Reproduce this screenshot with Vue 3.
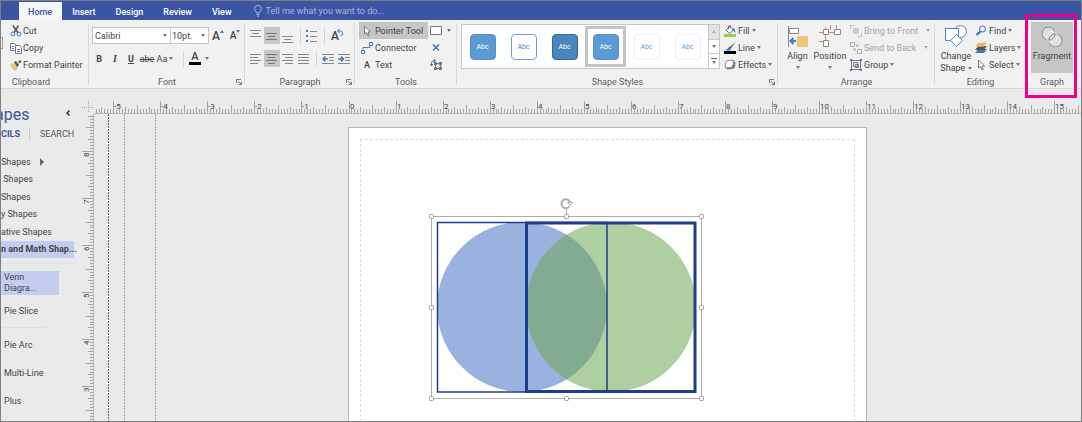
<script setup>
import { ref } from 'vue'

const tabs = ['Home', 'Insert', 'Design', 'Review', 'View']
const font = ref('Calibri')
const size = ref('10pt.')
const styles = ['solid', 'outline', 'deep', 'solid picked', 'faint', 'faint']
const stencils = ['Shapes', '\u00a0Shapes', 'Shapes', 'y Shapes', 'ative Shapes', 'n and Math Shap...']

const INCH = 47.05
const tickLength = (k) => (k % 16 === 0 ? 12 : k % 8 === 0 ? 8 : k % 4 === 0 ? 6 : 4)

const hTicks = []
for (let k = -86; k < 250; k++) {
  const x = Math.round(254.5 + (k * INCH) / 16)
  if (x >= 0) hTicks.push({ x, len: tickLength(k + 160), label: k % 16 === 0 ? String(k / 16) : '' })
}
const vTicks = []
for (let k = 0; k < 110; k++) {
  const y = Math.round(38 + ((k - 12) * INCH) / 16) - 1
  if (y >= 1) vTicks.push({ y, len: tickLength(k + 4), label: (k + 4) % 16 === 0 && k < 100 ? String(9 - (k + 4) / 16) : '' })
}
const handles = [[4, 18], [139, 18], [274, 18], [4, 109], [274, 109], [4, 200], [139, 200], [274, 200]]
</script>

<template>
  <div class="window">
    <header class="tabs">
      <button v-for="(t, i) in tabs" :key="t" class="tab" :class="{ active: i === 0 }">{{ t }}</button>
      <label class="tell">
        <svg width="8" height="12" viewBox="0 0 8 12" fill="none" stroke="#a9b8de"><path d="M2.5 8C2.5 6.5 .6 5.8.6 3.8a3.4 3.4 0 0 1 6.8 0C7.400 5.800 5.500 6.500 5.500 8zM2.500 9.500h3M3 11.200h2" /></svg>
        <input type="text" placeholder="Tell me what you want to do..." />
      </label>
    </header>

    <div class="ribbon">
      <section class="group clipboard">
        <div class="body">
          <span class="paste-edge"></span>
          <div class="rows">
            <button class="cmd"><svg width="12" height="12" viewBox="0 0 12 12" fill="none"><path d="M3 .5 8 8M8.500.5 3.800 8" stroke="#555" stroke-width="1.500" /><circle cx="2.800" cy="9" r="2" stroke="#3a78c0" /><circle cx="9" cy="9" r="2" stroke="#3a78c0" /></svg>Cut</button>
            <button class="cmd"><svg width="12" height="12" viewBox="0 0 12 12" fill="#fff" stroke="#778"><path d="M.5 1.500h4l2 2v5h-6z" /><path d="M5.500 3.500h4l2 2v6h-6z" /><path d="M7 7.500h3M7 9.500h3M2 4.500h2M2 6.500h2" stroke="#3a78c0" /></svg>Copy</button>
            <button class="cmd"><svg width="12" height="12" viewBox="0 0 12 12"><path d="M0 5 4 4l4 4-2 4-3-1z" fill="#efc37a" /><path d="m4 3 2-1 3 4-2 2zM8 3l2-2 1.500 1.500-2 2z" fill="#555" /></svg>Format Painter</button>
          </div>
        </div>
        <footer>Clipboard</footer>
      </section>

      <section class="group font">
        <div class="body two">
          <div class="line">
            <span class="combo face"><select v-model="font" aria-label="Font"><option>Calibri</option></select><i class="caret"></i></span>
            <span class="combo pt"><select v-model="size" aria-label="Font size"><option>10pt.</option></select><i class="caret"></i></span>
            <button class="icon grow" aria-label="Grow font"><b class="big">A</b><svg width="4" height="3" viewBox="0 0 4 3"><path d="M0 3 2 0l2 3z" fill="#3a78c0" /></svg></button>
            <button class="icon grow" aria-label="Shrink font"><b>A</b><svg width="4" height="3" viewBox="0 0 4 3"><path d="M0 0h4L2 3z" fill="#3a78c0" /></svg></button>
          </div>
          <div class="line letters">
            <button class="icon"><b>B</b></button>
            <button class="icon"><em>I</em></button>
            <button class="icon"><u>U</u></button>
            <button class="icon"><s>abc</s></button>
            <button class="icon case">Aa<i class="caret"></i></button>
            <span class="rule"></span>
            <button class="icon color"><b>A</b><i class="caret"></i></button>
          </div>
        </div>
        <footer>Font<svg class="launch" width="6" height="6" viewBox="0 0 6 6" fill="none" stroke="#777"><path d="M.5 4V.5H5M2 2l3 3M5.500 2.500v3h-3" /></svg></footer>
      </section>

      <section class="group para">
        <div class="body two">
          <div class="line">
            <button class="icon" aria-label="Align top"><svg width="12" height="16" viewBox="0 0 12 16" stroke="#888"><path d="M0 2.500h11M2 5.500h7M0 8.500h11" /></svg></button>
            <button class="icon on" aria-label="Align middle"><svg width="12" height="16" viewBox="0 0 12 16" stroke="#777"><path d="M0 5.500h11M2 8.500h7M0 11.500h11" /></svg></button>
            <button class="icon" aria-label="Align bottom"><svg width="12" height="16" viewBox="0 0 12 16" stroke="#888"><path d="M0 8.500h11M2 11.500h7M0 14.500h11" /></svg></button>
            <span class="rule"></span>
            <button class="icon" aria-label="Bullets"><svg width="12" height="14" viewBox="0 0 12 14"><path d="M4 2.500h7M4 7.500h7M4 12.500h7" stroke="#888" /><path d="M0 1h2v2H0zM0 6h2v2H0zM0 11h2v2H0z" fill="#3a78c0" /></svg></button>
            <span class="rule"></span>
            <button class="icon rotate" aria-label="Rotate text"><b>A</b><svg width="6" height="8" viewBox="0 0 6 8" fill="none" stroke="#3a78c0"><path d="M.5 2h2a2.500 2.500 0 0 1 1 5M2.500 0l-2 2 2 2" /></svg></button>
          </div>
          <div class="line">
            <button class="icon" aria-label="Align left"><svg width="12" height="12" viewBox="0 0 12 12" stroke="#888"><path d="M0 1.500h11M0 4.500h8M0 7.500h11M0 10.500h8" /></svg></button>
            <button class="icon on" aria-label="Center"><svg width="12" height="12" viewBox="0 0 12 12" stroke="#777"><path d="M0 1.500h11M2 4.500h7M0 7.500h11M2 10.500h7" /></svg></button>
            <button class="icon" aria-label="Align right"><svg width="12" height="12" viewBox="0 0 12 12" stroke="#888"><path d="M0 1.500h11M3 4.500h8M0 7.500h11M3 10.500h8" /></svg></button>
            <button class="icon" aria-label="Justify"><svg width="12" height="12" viewBox="0 0 12 12" stroke="#888"><path d="M0 1.500h11M0 4.500h11M0 7.500h11M0 10.500h11" /></svg></button>
            <span class="rule"></span>
            <button class="icon" aria-label="Decrease indent"><svg width="13" height="12" viewBox="0 0 13 12" stroke="#888" fill="none"><path d="M0 1.500h12M7 4.500h5M7 7.500h5M0 10.500h12" /><path d="M6 6H1.500M3.500 3.500 1 6l2.500 2.500" stroke="#3a78c0" stroke-width="1.500" /></svg></button>
            <button class="icon" aria-label="Increase indent"><svg width="13" height="12" viewBox="0 0 13 12" stroke="#888" fill="none"><path d="M0 1.500h12M7 4.500h5M7 7.500h5M0 10.500h12" /><path d="M0 6h5M3 3.500 5.500 6 3 8.500" stroke="#3a78c0" stroke-width="1.500" /></svg></button>
          </div>
        </div>
        <footer>Paragraph<svg class="launch" width="6" height="6" viewBox="0 0 6 6" fill="none" stroke="#777"><path d="M.5 4V.5H5M2 2l3 3M5.500 2.500v3h-3" /></svg></footer>
      </section>

      <section class="group tools">
        <div class="body">
          <div class="rows">
            <button class="cmd on"><svg width="12" height="12" viewBox="0 0 12 12"><path d="M3.500 1v8l2-1.500L7 11l1.200-.6L7 7h2.500z" fill="#fff" stroke="#777" /></svg>Pointer Tool</button>
            <button class="cmd"><svg width="12" height="12" viewBox="0 0 12 12" fill="none"><path d="M2 8V5.500h7V4" stroke="#777" /><path d="M.5 8.500h3v3h-3zM8.500.5h3v3h-3z" stroke="#3a78c0" /></svg>Connector</button>
            <button class="cmd"><b class="glyph">A</b>Text</button>
          </div>
          <div class="rows side">
            <button class="cmd" aria-label="Rectangle"><svg width="13" height="10" viewBox="0 0 13 10"><path d="M.5.5h11v8H.5z" fill="#fff" stroke="#777" /></svg><i class="caret"></i></button>
            <button class="cmd" aria-label="Connection point"><svg width="13" height="10" viewBox="0 0 13 10"><path d="m3 1.500 6 6m0-6-6 6" stroke="#3a78c0" stroke-width="1.500" /></svg></button>
            <button class="cmd" aria-label="Text block"><svg width="13" height="12" viewBox="0 0 13 12" fill="none"><path d="M5.500 4.500h5v5h-5z" stroke="#777" /><path d="M4 3h3v3H4zM9 3h3v3H9zM4 8h3v3H4zM9 8h3v3H9z" fill="#777" /><path d="M1.500 7V3.500Q1.500 1.500 5 1.500M0 5l1.500 2L3 5M3.500 0 5.500 1.500l-2 2" stroke="#3a78c0" /></svg></button>
          </div>
        </div>
        <footer>Tools</footer>
      </section>

      <section class="group styles">
        <div class="body">
          <div class="gallery">
            <div class="cells">
              <button v-for="(s, i) in styles" :key="i" class="cell" :class="s"><span>Abc</span></button>
            </div>
            <div class="scroller">
              <button aria-label="Previous styles"><i class="caret up"></i></button>
              <button aria-label="Next styles"><i class="caret"></i></button>
              <button aria-label="More styles"><i class="bar"></i><i class="caret"></i></button>
            </div>
          </div>
          <div class="rows">
            <button class="cmd"><svg width="12" height="12" viewBox="0 0 12 12"><path d="m2 5 4-3.500L9.500 5 5.500 8.500z" fill="#fff" stroke="#666" /><path d="M4.500 4V1q1-1 2 0v2" fill="none" stroke="#666" /><path d="M9 3q3 1 2 5-1-3-3-3z" fill="#3a78c0" /><path d="M0 9h12v3H0z" fill="#8fd14f" /></svg>Fill<i class="caret"></i></button>
            <button class="cmd"><svg width="12" height="12" viewBox="0 0 12 12"><path d="m11.500 0-5 7-2-1z" fill="#555" /><path d="M5 5 7 7 5.500 8.500H1Q3.500 7.500 5 5z" fill="#3a78c0" /><path d="M0 9h12v3H0z" fill="#000" /></svg>Line<i class="caret"></i></button>
            <button class="cmd"><svg width="12" height="12" viewBox="0 0 12 12"><path d="m3 2 7-.5 1.500 3-1 5-7 1L1 8z" fill="#777" /><path d="m3 1.500 6-.5.5 4-2 3.500-6 .5-.500-4z" fill="#fff" stroke="#888" /></svg>Effects<i class="caret"></i></button>
          </div>
        </div>
        <footer>Shape Styles<svg class="launch" width="6" height="6" viewBox="0 0 6 6" fill="none" stroke="#777"><path d="M.5 4V.5H5M2 2l3 3M5.500 2.500v3h-3" /></svg></footer>
      </section>

      <section class="group arrange">
        <div class="body">
          <button class="tall"><svg width="22" height="22" viewBox="0 0 22 22"><path d="M1.500 1v21" stroke="#888" /><path d="M2.500 3.500h9v5h-9z" fill="#fff" stroke="#888" /><path d="M10 11h11v11H10z" fill="#efc37a" /><path d="M9 16H4.500M6.500 13 3.500 16l3 3" fill="none" stroke="#3a78c0" stroke-width="2" /></svg><span>Align</span><i class="caret"></i></button>
          <button class="tall"><svg width="22" height="22" viewBox="0 0 22 22"><path d="M0 7.500h22M6.500 2v19M11.500 0v5M17.500 0v5M0 16.500h4" stroke="#e8806c" /><path d="M4.500 4.500h5v5h-5zM15.500 4.500h6v5h-6zM4.500 15.500h5v6h-5z" fill="#fff" stroke="#888" /></svg><span>Position</span><i class="caret"></i></button>
          <div class="rows">
            <button class="cmd dim"><svg width="12" height="12" viewBox="0 0 12 12" fill="none" stroke="#bbb"><path d="M.5 4V.500H4M8 11.500h3.500V8" /><path d="M3 3h6v6H3z" fill="#ccc" stroke="none" /></svg>Bring to Front<i class="caret far"></i></button>
            <button class="cmd dim"><svg width="12" height="12" viewBox="0 0 12 12" fill="none" stroke="#aaa"><path d="M.5.5h4v4h-4zM7.500 7.500h4v4h-4z" /><path d="M6 2h3v3H6zM3 6h3v3H3z" fill="#ccc" stroke="none" /></svg>Send to Back<i class="caret far"></i></button>
            <button class="cmd"><svg width="12" height="12" viewBox="0 0 12 12" fill="none" stroke="#777"><path d="M1.500 1.500h9v9h-9zM3.500 3.500h4v4h-4zM5.500 5.500h3v3h-3z" /><path d="M0 0h2v2H0zM10 0h2v2h-2zM0 10h2v2H0zM10 10h2v2h-2z" fill="#3a78c0" stroke="none" /></svg>Group<i class="caret"></i></button>
          </div>
        </div>
        <footer>Arrange</footer>
      </section>

      <section class="group editing">
        <div class="body">
          <button class="tall"><svg width="22" height="22" viewBox="0 0 22 22" fill="#fff" stroke="#4a84c4"><circle cx="15.500" cy="6.500" r="6" /><path d="M.5 3.500h13v12H.5z" /><path d="m11.500 9.500 6 6-6 6-6-6z" /></svg><span>Change</span><span>Shape <i class="caret"></i></span></button>
          <div class="rows">
            <button class="cmd"><svg width="12" height="12" viewBox="0 0 12 12" fill="none" stroke="#2f6fb5"><circle cx="7.500" cy="4" r="3" /><path d="M5.500 6.500 1.500 10" stroke-width="2" /></svg>Find<i class="caret"></i></button>
            <button class="cmd"><svg width="12" height="12" viewBox="0 0 12 12"><path d="m3 7.500 9-.5-3 4H0z" fill="#3a78c0" /><path d="m3 4.500 9-.5-3 4H0z" fill="#555" /><path d="m3 1 9-.5-3 4H0z" fill="#efb763" /></svg>Layers<i class="caret"></i></button>
            <button class="cmd"><svg width="12" height="12" viewBox="0 0 12 12"><path d="M3.500 1v8l2-1.500L7 11l1.200-.6L7 7h2.500z" fill="#fff" stroke="#777" /></svg>Select<i class="caret"></i></button>
          </div>
        </div>
        <footer>Editing</footer>
      </section>

      <section class="group graph">
        <div class="body">
          <button class="tall on"><svg width="22" height="22" viewBox="0 0 22 22" fill="#dedede" stroke="#8c8c8c"><circle cx="7.500" cy="8.500" r="6.500" /><circle cx="14.500" cy="15.500" r="6.500" /><circle cx="11" cy="12" r="5.500" fill="none" stroke="#f4f4f4" /><path d="M14 9a6.500 6.500 0 0 1-6 6 6.500 6.500 0 0 1 6-6z" fill="#f0f0f0" /></svg><span>Fragment</span></button>
        </div>
        <footer>Graph</footer>
        <div class="callout"></div>
      </section>
    </div>

    <main>
      <aside>
        <h1>apes<button aria-label="Collapse"><svg width="4" height="6" viewBox="0 0 4 6" fill="none" stroke="#333" stroke-width="1.500"><path d="M3.500.5 1 3l2.500 2.500" /></svg></button></h1>
        <nav><a href="#" class="current">CILS</a><a href="#">SEARCH</a></nav>
        <ul>
          <li v-for="(s, i) in stencils" :key="i" :class="{ sel: i === 5 }">{{ s }}<i v-if="i === 0" class="more"></i></li>
        </ul>
        <div class="masters">
          <div class="venn">Venn<br />Diagra...</div>
          <div class="slice">Pie Slice</div>
          <div class="master">Pie Arc</div>
          <div class="master">Multi-Line</div>
          <div class="master">Plus</div>
        </div>
      </aside>

      <div class="drawing">
        <svg class="corner" width="12" height="13" viewBox="0 0 12 13" stroke="#aaa" stroke-dasharray="1 1"><path d="M6.500 0v12M0 6.500h12" /></svg>
        <svg class="hruler" height="13">
          <g v-for="t in hTicks" :key="t.x">
            <rect :x="t.x" :y="12 - t.len" width="1" :height="t.len" fill="#a4a4a4" />
            <text v-if="t.label" :x="t.x + 1" y="8">{{ t.label }}</text>
          </g>
          <rect y="12" width="100%" height="1" fill="#b4b8ba" />
        </svg>
        <svg class="vruler" width="12">
          <g v-for="t in vTicks" :key="t.y">
            <rect :x="12 - t.len" :y="t.y" :width="t.len" height="1" fill="#a4a4a4" />
            <text v-if="t.label" :transform="`translate(7 ${t.y + 6}) rotate(-90)`">{{ t.label }}</text>
          </g>
          <rect x="11" width="1" height="100%" fill="#b4b8ba" />
        </svg>
        <div class="canvas">
          <svg class="guides" width="70" height="100%"><g stroke="#9aa4a9" stroke-dasharray="2 1"><line x1="14.500" x2="14.500" y1="0" y2="100%" stroke="#5a6872" /><line x1="30.500" x2="30.500" y1="0" y2="100%" /><line x1="61.500" x2="61.500" y1="0" y2="100%" /></g></svg>
          <div class="page">
            <div class="margins"></div>
            <svg class="shapes" width="280" height="206" viewBox="0 0 280 206">
              <defs><clipPath id="left"><circle cx="95" cy="109" r="85" /></clipPath></defs>
              <circle cx="95" cy="109" r="85" fill="#9ab2df" />
              <circle cx="184" cy="109" r="85" fill="#aed0a0" />
              <circle cx="184" cy="109" r="85" fill="#81ac92" clip-path="url(#left)" />
              <g fill="none" stroke="#1f3d8a">
                <path d="M10.500 24.500h169.500v169.500H10.500z" stroke-width="1.500" />
                <path d="M99.500 25h168.500v168.500H99.500z" stroke-width="3" />
              </g>
              <g fill="none" stroke="#adadad">
                <path d="M4.500 18.500h270v182h-270zM139.500 10v8" />
                <path d="M142.500 8.500a4.500 4.500 0 1 1 .8-4" stroke-width="2" />
                <path d="M140.500 4.500h5l-2.500 3z" fill="#fff" />
                <rect v-for="h in handles" :key="h.join()" :x="h[0] - 2 + 0.5" :y="h[1] - 2 + 0.5" width="4" height="4" rx="1" fill="#fff" stroke="#999" />
              </g>
            </svg>
          </div>
        </div>
      </div>
    </main>
  </div>
</template>

<style>
body { margin: 0; }
</style>

<style scoped>
.window { box-sizing: border-box; height: 100vh; display: flex; flex-direction: column; overflow: hidden; border: 1px solid #7f7f7f; background: #eaeaea; color: #444; font: 9px/12px Roboto, "Open Sans", sans-serif; }
button, input, select { font: inherit; color: inherit; background: none; border: 0; padding: 0; margin: 0; }
button { display: flex; align-items: center; white-space: nowrap; }
svg { display: block; flex: none; }
.tabs { flex: none; height: 19px; display: flex; padding-left: 18px; background: #3955a3; }
.tab { padding: 2px 10px 0; color: #fff; font-weight: 500; }
.tab.active { background: #f6f6f6; color: #3955a3; margin-top: 1px; padding: 1px 10px 0 9px; }
.tell { display: flex; align-items: center; gap: 4px; margin-left: 12px; }
.tell input { width: 160px; outline: 0; }
.tell input::placeholder { color: #a9b8de; opacity: 1; }

.ribbon { flex: none; display: flex; height: 68px; background: #f1f1f1; border-bottom: 1px solid #d8d8d8; }
.group { position: relative; box-sizing: border-box; display: flex; flex-direction: column; padding-top: 2px; }
.group:not(:last-child)::after { content: ""; position: absolute; right: 0; top: 3px; bottom: 3px; width: 1px; background: #dadada; }
.clipboard { width: 88px; }
.font { width: 156px; }
.para { width: 110px; }
.tools { width: 102px; }
.styles { flex: 1; }
.arrange { width: 157px; }
.editing { width: 91px; }
.graph { width: 55px; }
.body { display: flex; height: 51px; }
footer { display: flex; justify-content: center; margin-top: 3px; color: #5c5c5c; }
.clipboard footer { padding-right: 28px; }
.launch { position: absolute; right: 3px; bottom: 3px; }
.rows { display: flex; flex-direction: column; }
.cmd { height: 17px; gap: 2px; }
.clipboard .cmd { gap: 1px; }
.cmd.on, .tall.on, .icon.on { background: #c6c6c6; }
.dim { color: #a5a5a5; }
.caret { flex: none; display: inline-block; border: 2px solid transparent; border-top: 3px solid #777; border-bottom: 0; vertical-align: middle; }
.cmd .far { margin-left: 6px; border-top-color: #aaa; }
.caret.up { border-top: 0; border-bottom: 3px solid #aaa; }
.paste-edge { width: 1px; height: 10px; margin: 15px 7px 0 0; border: 1px solid #999; border-left: 0; }
.two { flex-direction: column; padding-top: 5px; box-sizing: border-box; gap: 6px; }
.line { display: flex; align-items: center; height: 17px; }
.font .line { padding-left: 3px; }
.font .line.letters { padding-left: 2px; }
.combo { box-sizing: border-box; display: flex; align-items: center; height: 17px; border: 1px solid #c6c6c6; background: #fff; padding: 0 3px 0 2px; }
.combo select { appearance: none; flex: 1; min-width: 0; outline: 0; }
.face { width: 79px; }
.pt { width: 39px; margin-left: -1px; padding-left: 1px; }
.icon { justify-content: center; width: 16px; height: 17px; }
.grow { align-items: center; margin-left: 1px; font-size: 10px; }
.grow svg { margin-top: -8px; }
.grow b, .color b, .rotate b { font-weight: 500; }
.grow .big { font-size: 12px; }
.letters em { font-family: "Liberation Serif", serif; font-weight: bold; font-size: 10px; }
.letters u { font-weight: bold; }
.letters .case { width: 20px; gap: 2px; }
.rule { width: 1px; height: 16px; margin: 0 3px 0 4px; background: #d4d4d4; }
.letters .color { width: 24px; gap: 4px; }
.letters .case + .rule { margin-left: 8px; }
.color b { width: 12px; border-bottom: 3px solid #000; line-height: 10px; font-size: 11px; }
.para .line { padding-left: 3px; }
.rotate { width: 18px; }
.rotate b { font-size: 12px; }
.rotate svg { margin-top: -5px; margin-left: -2px; }
.tools .rows:first-child { padding-left: 4px; }
.tools .rows:first-child .cmd { width: 69px; box-sizing: border-box; padding-left: 2px; }
.side { padding-left: 2px; }
.side .caret { margin-left: 2px; }
.glyph { width: 12px; text-align: center; font-weight: 500; }
.styles .body { padding-left: 4px; gap: 4px; }
.gallery { flex: 1; display: flex; box-sizing: border-box; height: 45px; margin-top: 2px; border: 1px solid #c4c8ca; background: #fff; }
.cells { flex: 1; display: flex; }
.cell { flex: 1; justify-content: center; box-sizing: border-box; margin: 1px 0; border: 3px solid transparent; }
.cell span { box-sizing: border-box; width: 26px; height: 26px; line-height: 24px; border: 1px solid #5a92c8; border-radius: 4px; font-size: 7px; color: #fff; background: #5b9bd5; flex: none; }
.cell.outline span { background: #fff; color: #4a87c0; border-color: #6ea0cf; }
.cell.deep span { background: #4a86bd; border-color: #38689b; }
.cell.faint span { background: #fff; color: #5b9bd5; border-color: #eceef6; }
.cell.picked { border-color: #c4c4c4; }
.scroller { width: 11px; box-sizing: border-box; border-left: 1px solid #c4c8ca; display: flex; flex-direction: column; }
.scroller button { flex: 1; flex-direction: column; justify-content: center; gap: 2px; }
.scroller button:first-child { background: #e3e3e3; }
.scroller button + button { border-top: 1px solid #c4c8ca; }
.bar { width: 6px; height: 1px; background: #666; }
.styles .rows { width: 54px; }
.tall { flex-direction: column; justify-content: flex-start; padding-top: 3px; }
.tall svg { margin-bottom: 3px; }
.tall > .caret { margin-top: 4px; }
.arrange .body { padding-left: 7px; }
.arrange .tall { width: 25px; }
.arrange .tall + .tall { width: 40px; }
.editing .body { padding-left: 3px; }
.editing .tall { width: 36px; margin-right: 1px; }
.graph .tall { width: 42px; }
.graph .body { padding-left: 5px; }
.graph footer { padding-right: 3px; }
.callout { position: absolute; box-sizing: border-box; inset: -6px 4px -10px -1px; border: 3px solid #ec008c; z-index: 2; }

main { flex: 1; min-height: 0; display: flex; padding-top: 12px; }
aside { flex: none; width: 81px; overflow: hidden; white-space: pre; }
h1 { display: flex; justify-content: space-between; margin: 5px 12px 0 0; font-size: 16px; line-height: 18px; font-weight: 400; color: #3955a3; text-indent: -6px; }
h1 button { align-items: flex-start; padding-top: 4px; }
nav { display: flex; margin-top: 4px; }
nav a { color: #555; text-decoration: none; }
nav .current { width: 29px; margin-right: 10px; border-right: 1px solid #ccc; color: #3955a3; font-weight: 700; box-sizing: border-box; }
ul { list-style: none; margin: 13px 0 0; padding: 0; height: 105px; display: flex; flex-direction: column; }
li { flex: 1; display: flex; align-items: center; width: 73px; }
li.sel { background: #c3cdf0; font-weight: 700; }
.more { margin-left: 9px; border: 4px solid transparent; border-left-color: #666; border-right: 0; }
.masters { margin-top: 5px; padding-top: 7px; border-top: 1px solid #e0e0e0; width: 73px; }
.venn { width: 55px; padding: 1px 0 1px 3px; line-height: 11px; background: #c3cdf0; }
.slice { width: 41px; padding: 10px 0 10px 3px; border-bottom: 1px solid #dfdfdf; }
.master { padding-left: 3px; line-height: 28px; }
.slice + .master { margin-top: 3px; }

.drawing { flex: 1; min-width: 0; display: grid; grid-template: 13px 1fr / 12px 1fr; }
.hruler { width: 100%; overflow: hidden; }
.vruler { height: 100%; overflow: hidden; }
text { font-size: 8px; fill: #444; }
.canvas { position: relative; overflow: hidden; min-height: 0; }
.guides { position: absolute; left: 0; top: 0; height: 100%; }
.page { position: relative; width: 517px; height: 400px; margin: 13px 0 0 254px; border: 1px solid #b0b8c2; background: #fff; }
.margins { position: absolute; inset: 11px; border: 1px dashed #dcdcdc; }
.shapes { position: absolute; left: 78px; top: 70px; }
</style>
